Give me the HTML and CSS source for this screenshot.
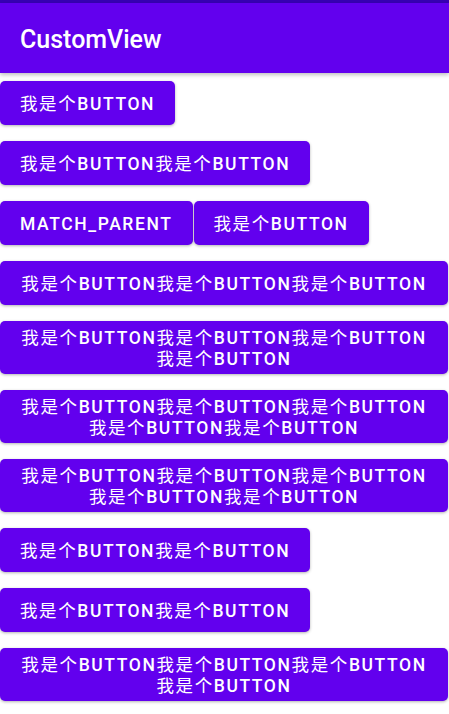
FILE: index.html
```html
<!DOCTYPE html>
<html lang="zh">
<head>
<meta charset="utf-8">
<title>CustomView</title>
<link rel="stylesheet" href="styles.css">
</head>
<body>
<div class="status"></div>
<header class="appbar"><h1 class="title">CustomView</h1></header>
<main class="flow">
  <button class="btn"><span class="cjk">我是个</span>Button</button>
  <button class="btn"><span class="cjk">我是个</span>Button<span class="cjk">我是个</span>Button</button>
  <button class="btn">match_parent</button>
  <button class="btn"><span class="cjk">我是个</span>Button</button>
  <button class="btn full"><span class="cjk">我是个</span>Button<span class="cjk">我是个</span>Button<span class="cjk">我是个</span>Button</button>
  <button class="btn full"><span class="cjk">我是个</span>Button<span class="cjk">我是个</span>Button<span class="cjk">我是个</span>Button<br><span class="cjk">我是个</span>Button</button>
  <button class="btn full"><span class="cjk">我是个</span>Button<span class="cjk">我是个</span>Button<span class="cjk">我是个</span>Button<br><span class="cjk">我是个</span>Button<span class="cjk">我是个</span>Button</button>
  <button class="btn full"><span class="cjk">我是个</span>Button<span class="cjk">我是个</span>Button<span class="cjk">我是个</span>Button<br><span class="cjk">我是个</span>Button<span class="cjk">我是个</span>Button</button>
  <button class="btn"><span class="cjk">我是个</span>Button<span class="cjk">我是个</span>Button</button>
  <button class="btn"><span class="cjk">我是个</span>Button<span class="cjk">我是个</span>Button</button>
  <button class="btn full"><span class="cjk">我是个</span>Button<span class="cjk">我是个</span>Button<span class="cjk">我是个</span>Button<br><span class="cjk">我是个</span>Button</button>
</main>
</body>
</html>
```

FILE: styles.css
```css
html, body {
  margin: 0;
  padding: 0;
  background: #ffffff;
  overflow: hidden;
}
body {
  font-family: Roboto, "Noto Sans CJK SC", sans-serif;
}
.status {
  height: 3px;
  background: #3700B3;
}
.appbar {
  height: 70px;
  background: #6200EE;
  display: flex;
  align-items: center;
  padding: 0 20px;
  box-shadow: 0 2px 4px rgba(0, 0, 0, 0.25);
  position: relative;
  z-index: 1;
}
.title {
  margin: 0;
  color: #ffffff;
  font-family: Roboto, sans-serif;
  font-weight: 500;
  font-size: 25px;
  line-height: 30px;
  position: relative;
  top: 2px;
}
.flow {
  display: flex;
  flex-wrap: wrap;
  align-items: flex-start;
  column-gap: 1px;
}
.btn {
  margin: 8px 0;
  min-height: 44px;
  padding: 7px 20px 5px;
  border: none;
  border-radius: 5px;
  background: #6200EE;
  color: #ffffff;
  font-family: Roboto, "Noto Sans CJK SC", sans-serif;
  font-weight: 500;
  font-size: 17.5px;
  line-height: 20.5px;
  letter-spacing: 1.6px;
  text-transform: uppercase;
  text-align: center;
  box-shadow: 0 1px 3px rgba(0, 0, 0, 0.3);
  white-space: nowrap;
}
.cjk {
  font-family: "Noto Sans CJK SC", sans-serif;
  font-weight: 400;
  line-height: 1;
}
.full {
  width: 448px;
  flex: 0 0 448px;
}
```
